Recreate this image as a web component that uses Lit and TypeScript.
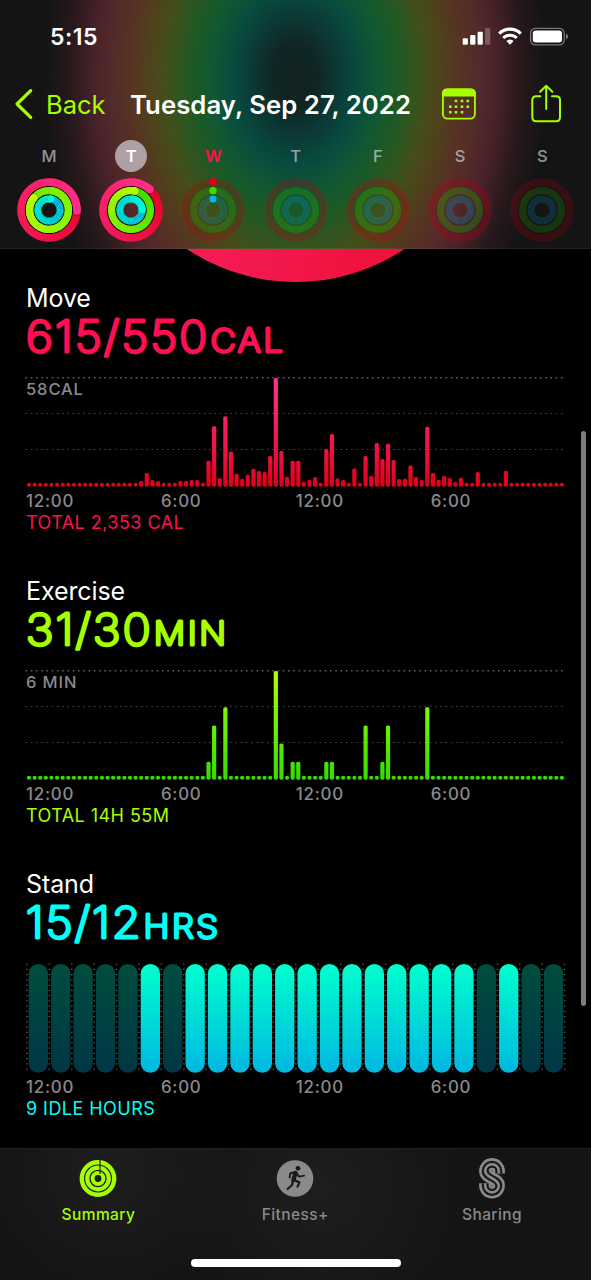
import { css, html, LitElement, nothing, svg } from 'lit'
import { customElement, property } from 'lit/decorators.js'

type Rgb = [number, number, number]

interface Day {
  letter: string
  state?: 'selected' | 'today'
  progress?: [number, number, number]
  fade?: number
}

interface Metric {
  name: string
  value: string
  unit: string
  peak: string
  summary: string
  kind: 'move' | 'exercise' | 'stand'
  bars: number[]
}

const RINGS: { radius: number; width: number; from: Rgb; to: Rgb }[] = [
  { radius: 27.9, width: 7.6, from: [226, 0, 24], to: [255, 48, 140] },
  { radius: 19.4, width: 7.3, from: [56, 222, 0], to: [180, 255, 0] },
  { radius: 11.1, width: 7, from: [0, 182, 226], to: [0, 250, 212] },
]

const DAYS: Day[] = [
  { letter: 'M', progress: [1.255, 1.86, 1.03] },
  { letter: 'T', state: 'selected', progress: [1.118, 1.033, 1.25] },
  { letter: 'W', state: 'today', progress: [0, 0, 0], fade: 0.2 },
  { letter: 'T', fade: 0.22 },
  { letter: 'F', fade: 0.24 },
  { letter: 'S', fade: 0.24 },
  { letter: 'S', fade: 0.18 },
]

const sparse = (length: number, values: Record<number, number>) =>
  Array.from({ length }, (_, i) => values[i] ?? 4)

// quarter-hour bar heights, in chart pixels
const MOVE = sparse(96, {
  20: 5.7, 21: 13.7, 22: 6.7, 23: 5.7, 27: 5.7, 28: 5.7, 29: 6.7, 30: 6.7,
  32: 26, 33: 60.5, 34: 8.7, 35: 70.5, 36: 35.3, 37: 13, 38: 8, 39: 12,
  40: 18, 41: 15.7, 42: 14.7, 43: 30.7, 44: 108.7, 45: 36, 46: 10, 47: 26,
  48: 26, 49: 5, 50: 7, 51: 9.7, 53: 37.7, 54: 52.7, 55: 8.3, 56: 6.7,
  58: 18.3, 60: 30.7, 61: 10.7, 62: 43.7, 63: 27.7, 64: 43, 65: 26.7, 66: 7.7,
  67: 8, 68: 21.3, 69: 9.7, 70: 7, 71: 60, 72: 13.7, 73: 7, 74: 10.7,
  75: 8.7, 76: 4.7, 77: 9, 80: 14.7, 85: 16,
})

const EXERCISE = sparse(96, {
  32: 18, 33: 54.3, 35: 72.5, 44: 108.7, 45: 36.3, 47: 18, 48: 18,
  53: 18, 54: 18, 60: 54.3, 63: 18, 64: 54.3, 71: 72.5,
})

const IDLE_HOURS = [0, 1, 2, 3, 4, 6, 20, 22, 23]
const STAND = Array.from({ length: 24 }, (_, i) => (IDLE_HOURS.includes(i) ? 0 : 1))

const METRICS: Metric[] = [
  {
    name: 'Move',
    value: '615/550',
    unit: 'CAL',
    peak: '58CAL',
    summary: 'TOTAL 2,353 CAL',
    kind: 'move',
    bars: MOVE,
  },
  {
    name: 'Exercise',
    value: '31/30',
    unit: 'MIN',
    peak: '6 MIN',
    summary: 'TOTAL 14H 55M',
    kind: 'exercise',
    bars: EXERCISE,
  },
  {
    name: 'Stand',
    value: '15/12',
    unit: 'HRS',
    peak: '',
    summary: '9 IDLE HOURS',
    kind: 'stand',
    bars: STAND,
  },
]

const mix = (a: Rgb, b: Rgb, t: number) =>
  `rgb(${a.map((v, i) => Math.round(v + (b[i] - v) * t)).join(',')})`

const polar = (radius: number, turn: number) => {
  const angle = turn * Math.PI * 2 - Math.PI / 2
  return [32 + radius * Math.cos(angle), 32 + radius * Math.sin(angle)]
}

@customElement('activity-rings')
export class ActivityRings extends LitElement {
  static styles = css`
    :host {
      display: block;
      width: 64px;
      height: 64px;
    }

    svg {
      display: block;
    }
  `

  @property({ attribute: false })
  progress?: [number, number, number]

  @property({ type: Number })
  fade = 0

  private renderRing(index: number) {
    const { radius, width, from, to } = RINGS[index]
    const progress = this.progress?.[index]
    const track = this.fade
      ? svg`<circle cx="32" cy="32" r=${radius} fill="none" stroke=${mix(from, from, 0)}
          stroke-width=${width} stroke-opacity=${this.fade} />`
      : nothing
    if (progress === undefined) return track

    const [capX, capY] = polar(radius, progress)
    if (progress === 0) {
      return svg`${track}<circle cx=${capX} cy=${capY} r=${width / 2} fill=${mix(from, to, 0)} />`
    }

    // the arc is cut in short pieces so its colour can run along the stroke
    const steps = Math.ceil(progress * 60)
    const pieces = Array.from({ length: steps }, (_, i) => {
      const [x1, y1] = polar(radius, (i / steps) * progress - 0.002)
      const [x2, y2] = polar(radius, ((i + 1) / steps) * progress + 0.002)
      return svg`<path d="M${x1} ${y1}A${radius} ${radius} 0 0 1 ${x2} ${y2}" fill="none"
        stroke=${mix(from, to, i / steps)} stroke-width=${width} />`
    })
    const [shadowX, shadowY] = polar(radius, progress + 0.008)
    return svg`
      ${pieces.slice(0, -6)}
      <circle cx=${shadowX} cy=${shadowY} r=${width / 2} fill="#000" fill-opacity="0.2" />
      ${pieces.slice(-6)}
      <circle cx=${capX} cy=${capY} r=${width / 2} fill=${mix(from, to, 1)} />
    `
  }

  protected render() {
    return html`
      <svg width="64" height="64" viewBox="0 0 64 64">
        <circle
          cx="32"
          cy="32"
          r="20"
          fill="none"
          stroke="#000"
          stroke-width="22"
          stroke-opacity=${this.fade ? 0.08 : 0.75}
        />
        ${[0, 1, 2].map((index) => this.renderRing(index))}
      </svg>
    `
  }
}

@customElement('metric-section')
export class MetricSection extends LitElement {
  static styles = css`
    :host {
      display: block;
      height: 293px;
      padding-left: 25px;
      box-sizing: border-box;
    }

    svg {
      display: block;
      overflow: visible;
    }

    .move {
      --accent: #ff0f50;
    }

    .exercise {
      --accent: #a6ff00;
    }

    .stand {
      --accent: #00fff6;
    }

    h2 {
      margin: 0 0 0 1px;
      padding-top: 1px;
      font-size: 25px;
      line-height: 30px;
      font-weight: 400;
      letter-spacing: -0.1px;
      color: #fff;
    }

    /* a light weight under a thick round-joined stroke gives the soft letter ends */
    .value {
      font-size: 43px;
      font-weight: 200;
      fill: var(--accent);
      stroke: var(--accent);
      stroke-width: 2.8px;
      stroke-linejoin: round;
      letter-spacing: 1.7px;
    }

    .unit {
      font-size: 32px;
      stroke-width: 3px;
      letter-spacing: 2.4px;
    }

    .peak {
      font-size: 16.5px;
      font-weight: 500;
      letter-spacing: 0.9px;
      fill: #8a898f;
    }

    .hours {
      display: grid;
      grid-template-columns: repeat(4, 134.9px);
      margin: 1px 0 0 1px;
      font-size: 16.9px;
      line-height: 20px;
      font-weight: 500;
      letter-spacing: 0.75px;
      color: #8a898f;
    }

    .summary {
      margin: 1px 0 0 1px;
      font-size: 18px;
      line-height: 22px;
      letter-spacing: 0.45px;
      color: var(--accent);
    }
  `

  @property({ attribute: false })
  metric!: Metric

  private renderBars() {
    const { bars, peak } = this.metric
    return svg`
      <g stroke="#8a8a8a" stroke-width="1.4" stroke-dasharray="1.6 3.65">
        <path d="M.5 4.7H540" stroke-opacity="0.7" />
        <path d="M.5 40.5H540M.5 76.5H540" stroke-width="1.1" stroke-opacity="0.5" />
      </g>
      <text class="peak" x="1" y="22.3">${peak}</text>
      ${bars.map(
        (height, i) => svg`<rect x=${1.9 + i * 5.61} y=${113.7 - height} width="4.2"
          height=${height} rx=${height > 4 ? 1.6 : 2.1} fill="url(#fill)" />`,
      )}
    `
  }

  private renderPills() {
    return svg`
      ${Array.from(
        { length: 25 },
        (_, i) => svg`<path d="M${2 + i * 22.4} 4.4V113" stroke="#8a8a8a" stroke-width="1.6"
          stroke-opacity="0.6" stroke-dasharray="1.3 3.95" />`,
      )}
      ${this.metric.bars.map(
        (stood, i) => svg`<rect x=${3.7 + i * 22.4} y="5" width="19.3" height="108.8" rx="9.6"
          fill=${stood ? 'url(#fill)' : 'url(#idle)'} />`,
      )}
    `
  }

  protected render() {
    const { kind, name, value, unit, summary } = this.metric
    const stops = {
      move: ['#ff3091', '#f51a55', '#e00019'],
      exercise: ['#b4ff00', '#6cf000', '#35dc00'],
      stand: ['#00ffce', '#00dcd7', '#00b8e2'],
    }[kind]

    return html`
      <section class=${kind}>
        <h2>${name}</h2>
        <svg width="400" height="60" viewBox="0 0 400 60">
          <text class="value" x="0.8" y="38.6" transform="scale(1.09 1)">${value}<tspan class="unit" dx="1">${unit}</tspan></text>
        </svg>
        <svg width="541" height="117" viewBox="0 0 541 117">
          <defs>
            <linearGradient id="fill" gradientUnits="userSpaceOnUse" x1="0" y1="5" x2="0" y2="113">
              <stop offset="0" stop-color=${stops[0]} />
              <stop offset="0.5" stop-color=${stops[1]} />
              <stop offset="1" stop-color=${stops[2]} />
            </linearGradient>
            <linearGradient id="idle" gradientUnits="userSpaceOnUse" x1="0" y1="5" x2="0" y2="113">
              <stop offset="0" stop-color="#004d3e" />
              <stop offset="1" stop-color="#003745" />
            </linearGradient>
          </defs>
          ${kind === 'stand' ? this.renderPills() : this.renderBars()}
        </svg>
        <div class="hours">
          <span>12:00</span><span>6:00</span><span>12:00</span><span>6:00</span>
        </div>
        <div class="summary">${summary}</div>
      </section>
    `
  }
}

@customElement('app-root')
export class AppRoot extends LitElement {
  static styles = css`
    :host {
      display: block;
      font-family: Inter, 'Liberation Sans', sans-serif;
    }

    svg {
      display: block;
    }

    .screen {
      position: relative;
      display: flex;
      flex-direction: column;
      width: 591px;
      height: 1280px;
      overflow: hidden;
      background: #000;
    }

    .header {
      height: 249px;
      flex: none;
      box-shadow: inset 0 -1px rgba(255, 255, 255, 0.06);
      background: radial-gradient(
        ellipse 252px 355px at 295px 76px,
        #112221 0%,
        #0f2625 9%,
        #0b3b37 18%,
        #084b3e 25%,
        #105733 33%,
        #1b5a25 40%,
        #2f5520 46%,
        #434f1a 52%,
        #4f421b 58%,
        #563224 66%,
        #52292a 74%,
        #452128 81%,
        #26181b 90%,
        #141414 100%
      );
    }

    .status {
      display: flex;
      justify-content: space-between;
      align-items: center;
      height: 73px;
      padding: 0 22px 0 50px;
      font-size: 23px;
      font-weight: 600;
      letter-spacing: 0.5px;
      color: #fff;
    }

    .nav {
      display: flex;
      align-items: center;
      height: 62px;
      padding-left: 14px;
      color: #a6ff00;
      font-size: 25.5px;
    }

    .back {
      width: 116px;
      display: flex;
      align-items: center;
      gap: 12px;
    }

    h1 {
      width: 312px;
      margin: 0;
      font-size: 25.7px;
      font-weight: 600;
      letter-spacing: 0.06px;
      color: #fff;
      white-space: nowrap;
    }

    .share {
      margin-left: 54px;
    }

    .week {
      display: grid;
      grid-template-columns: repeat(7, 82.2px);
      padding-left: 8px;
    }

    .day {
      display: flex;
      flex-direction: column;
      align-items: center;
      gap: 6px;
      padding-top: 5px;
    }

    .letter {
      width: 32px;
      height: 32px;
      line-height: 32px;
      border-radius: 50%;
      text-align: center;
      font-size: 16.5px;
      font-weight: 500;
      color: rgba(235, 235, 245, 0.6);
    }

    .letter.selected {
      background: #aea1a5;
      color: #fff;
      font-weight: 600;
    }

    .letter.today {
      color: #ff0f50;
      font-weight: 600;
    }

    .content {
      flex: 1;
      min-height: 0;
      overflow: hidden;
    }

    .tabs {
      flex: none;
      height: 132px;
      box-sizing: border-box;
      border-top: 1px solid #202020;
      background:
        radial-gradient(circle 130px at 110px 20px, rgba(255, 255, 255, 0.045), transparent),
        radial-gradient(circle 150px at 320px 40px, rgba(255, 255, 255, 0.045), transparent), #141414;
    }

    .tab-row {
      display: grid;
      grid-template-columns: repeat(3, 196.8px);
    }

    .tab {
      display: flex;
      flex-direction: column;
      align-items: center;
      padding-top: 7px;
      gap: 4px;
      font-size: 15.5px;
      line-height: 22px;
      font-weight: 500;
      letter-spacing: 0.4px;
      color: #8a8a8a;
    }

    .tab.active {
      color: #a6ff00;
    }

    .home {
      width: 210px;
      height: 8px;
      margin: 33px auto 0;
      border-radius: 4px;
      background: #fff;
    }

    .scrollbar {
      position: absolute;
      left: 581px;
      top: 431px;
      width: 5px;
      height: 575px;
      border-radius: 3px;
      background: #7d7d7d;
    }
  `

  private renderStatus() {
    return html`
      <div class="status">
        <span>5:15</span>
        <svg width="107" height="20" viewBox="0 0 107 20">
          <g fill="#fff">
            <rect x="0.7" y="11.3" width="5.2" height="6.5" rx="1.2" />
            <rect x="8.2" y="8" width="5.2" height="9.8" rx="1.2" />
            <rect x="15.6" y="4.7" width="5.2" height="13.1" rx="1.2" />
            <rect x="23.1" y="1" width="5.2" height="16.8" rx="1.2" fill-opacity="0.25" />
          </g>
          <g fill="none" stroke="#fff" stroke-width="3.1">
            <path d="M37.2 6.7A15 15 0 0 1 58.8 6.7" />
            <path d="M41.3 11A9.4 9.4 0 0 1 54.7 11" />
          </g>
          <path d="M44.4 14A5 5 0 0 1 51.6 14L48 17.8Z" fill="#fff" />
          <rect x="68.6" y="1.3" width="33.6" height="16.6" rx="4.9" fill="none" stroke="#fff" stroke-opacity="0.42" stroke-width="1.3" />
          <rect x="70.8" y="3.6" width="29.2" height="12" rx="3" fill="#fff" />
          <path d="M104 6.6Q106 7.4 106 9.6T104 12.6Z" fill="#fff" fill-opacity="0.45" />
        </svg>
      </div>
    `
  }

  private renderNav() {
    return html`
      <div class="nav">
        <div class="back">
          <svg width="20" height="32" viewBox="0 0 20 32">
            <path d="M16.7 2.7L3 16L16.7 29.3" fill="none" stroke="currentColor" stroke-width="3.2" stroke-linecap="round" stroke-linejoin="round" />
          </svg>
          <span>Back</span>
        </div>
        <h1>Tuesday, Sep 27, 2022</h1>
        <svg width="34" height="32" viewBox="0 0 34 32">
          <rect x="0.9" y="1.4" width="32" height="29.2" rx="4.5" fill="none" stroke="currentColor" stroke-width="1.8" />
          <path d="M0 8.4V5.5Q0 .5 5 .5H28.8Q33.8.5 33.8 5.5V8.4Z" fill="currentColor" />
          <path
            d="M12.7 13h2.6M18.7 13h2.6M24.4 13h2.6M7 18.7h2.6M12.7 18.7h2.6M18.7 18.7h2.6M24.4 18.7h2.6M7 24.2h2.6M12.7 24.2h2.6M18.7 24.2h2.6"
            stroke="currentColor"
            stroke-width="2.4"
          />
        </svg>
        <svg class="share" width="32" height="40" viewBox="0 0 32 40">
          <g fill="none" stroke="currentColor" stroke-width="2" stroke-linecap="round" stroke-linejoin="round">
            <path d="M10.3 12.3H6.3Q2.3 12.3 2.3 16.3V33.3Q2.3 37.3 6.3 37.3H26Q30 37.3 30 33.3V16.3Q30 12.3 26 12.3H22" />
            <path d="M16.2 25V2M10.1 7.8L16.2 1.7L22.3 7.8" />
          </g>
        </svg>
      </div>
    `
  }

  private renderTabs() {
    return html`
      <div class="tabs">
        <div class="tab-row">
          <div class="tab active">
            <svg width="44" height="44" viewBox="0 0 44 44">
              <g fill="none" stroke="currentColor">
                <circle cx="22" cy="22.5" r="16.2" stroke-width="4.4" />
                <circle cx="22" cy="22.5" r="10.8" stroke-width="4.2" />
                <circle cx="22" cy="22.5" r="5.4" stroke-width="4" />
              </g>
              <path d="M24 4V18" stroke="#1b1b1b" stroke-width="1.2" />
            </svg>
            Summary
          </div>
          <div class="tab">
            <svg width="44" height="44" viewBox="0 0 44 44">
              <circle cx="22" cy="22.5" r="18.3" fill="currentColor" />
              <circle cx="25" cy="12.3" r="2.4" fill="#1b1b1b" />
              <g fill="none" stroke="#1b1b1b" stroke-linecap="round" stroke-linejoin="round">
                <path d="M22.4 17L20.4 24" stroke-width="4.4" />
                <path d="M22 16.2L17.4 17.2L16.6 21.5M23.4 16.8L26 20.6L31 19.6" stroke-width="1.9" />
                <path d="M21 24L26.4 26.4L24.6 30.6M20 24.5L19 29L14.6 33" stroke-width="2.3" />
              </g>
            </svg>
            Fitness+
          </div>
          <div class="tab">
            <svg width="44" height="44" viewBox="0 0 44 44">
              <g fill="none">
                ${[
                  ['currentColor', 12.2],
                  ['#191919', 7],
                  ['currentColor', 2.6],
                ].map(
                  ([stroke, width]) => svg`<path stroke=${stroke} stroke-width=${width}
                    d="M28.8 17.4V15A6.8 6.8 0 0 0 15.2 15C15.2 22.5 28.8 22 28.8 29.6A6.8 6.8 0 0 1 15.2 29.6V27.2" />`,
                )}
              </g>
            </svg>
            Sharing
          </div>
        </div>
        <div class="home"></div>
      </div>
    `
  }

  protected render() {
    return html`
      <div class="screen">
        <div class="header">
          ${this.renderStatus()} ${this.renderNav()}
          <div class="week">
            ${DAYS.map(
              (day) => html`
                <div class="day">
                  <span class="letter ${day.state ?? ''}">${day.letter}</span>
                  <activity-rings .progress=${day.progress} .fade=${day.fade ?? 0}></activity-rings>
                </div>
              `,
            )}
          </div>
        </div>
        <div class="content">
          <svg width="591" height="33" viewBox="0 0 591 33">
            <defs>
              <linearGradient id="ring" x1="0" x2="1">
                <stop offset="0.3" stop-color="#f51b53" />
                <stop offset="0.7" stop-color="#ee123c" />
              </linearGradient>
            </defs>
            <circle cx="295.7" cy="-163.5" r="196.5" fill="url(#ring)" />
          </svg>
          ${METRICS.map((metric) => html`<metric-section .metric=${metric}></metric-section>`)}
        </div>
        ${this.renderTabs()}
        <div class="scrollbar"></div>
      </div>
    `
  }
}

declare global {
  interface HTMLElementTagNameMap {
    'activity-rings': ActivityRings
    'metric-section': MetricSection
    'app-root': AppRoot
  }
}
